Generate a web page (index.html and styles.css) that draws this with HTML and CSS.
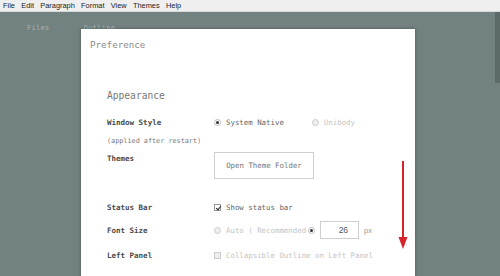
FILE: index.html
```html
<!DOCTYPE html>
<html lang="en">
<head>
  <meta charset="UTF-8" />
  <title>Preference</title>
  <link rel="stylesheet" href="styles.css">
</head>
<body>
  <div class="menubar">
    <span>File</span><span>Edit</span><span>Paragraph</span><span>Format</span><span>View</span><span>Themes</span><span>Help</span>
  </div>
  <div class="workspace">
    <div class="tabs"><span>Files</span><span>Outline</span></div>
    <div class="scrollbar"></div>

    <div class="modal">
      <h2 class="title">Preference</h2>
      <h3 class="section">Appearance</h3>

      <div class="rows">
        <div class="row row-window">
          <label class="name">Window Style</label>
          <div class="ctrl">
            <span class="opt"><i class="radio on"></i>System Native</span>
            <span class="opt off"><i class="radio"></i>Unibody</span>
          </div>
        </div>
        <div class="note">(applied after restart)</div>

        <div class="row row-themes">
          <label class="name">Themes</label>
          <div class="ctrl"><button>Open Theme Folder</button></div>
        </div>

        <div class="row row-status">
          <label class="name">Status Bar</label>
          <div class="ctrl"><span class="opt"><i class="check on"></i>Show status bar</span></div>
        </div>

        <div class="row row-font">
          <label class="name">Font Size</label>
          <div class="ctrl">
            <span class="opt off"><i class="radio"></i>Auto ( Recommended</span>
            <i class="radio on tight"></i>
            <input class="size" value="26" />
            <span class="unit">px</span>
          </div>
        </div>

        <div class="row row-left">
          <label class="name">Left Panel</label>
          <div class="ctrl"><span class="opt off"><i class="check"></i>Collapsible Outline on Left Panel</span></div>
        </div>
      </div>

      <svg class="arrow" width="12" height="90" viewBox="0 0 12 90">
        <line x1="6" y1="0" x2="6" y2="80" stroke="#d8222c" stroke-width="2" />
        <polygon points="1.5,76 10.5,76 6,88" fill="#d8222c" />
      </svg>
    </div>
  </div>
</body>
</html>
```

FILE: styles.css
```css
* {
  box-sizing: border-box;
}
body {
  margin: 0;
  width: 500px;
  height: 276px;
  overflow: hidden;
  font-family: "DejaVu Sans Mono", "Liberation Mono", monospace;
  background: #728281;
}
.menubar {
  height: 12px;
  background: #efefef;
  border-bottom: 1px solid #d6d8d8;
  display: flex;
  gap: 6.3px;
  padding-left: 3px;
  font-family: "Liberation Sans", Arial, sans-serif;
  font-size: 7.4px;
  line-height: 11px;
  color: #222;
}
.workspace {
  position: relative;
  height: 264px;
}
.tabs {
  display: flex;
  gap: 34px;
  padding: 12px 0 0 27px;
  font-size: 7px;
  color: #a8b4b4;
  letter-spacing: 0.3px;
}
.scrollbar {
  position: absolute;
  right: 0;
  top: 0;
  width: 5px;
  height: 71px;
  background: #5c6a6a;
}
.modal {
  position: absolute;
  left: 81px;
  top: 17px;
  width: 334px;
  height: 260px;
  background: #fff;
  box-shadow: 0 0 3px rgba(0, 0, 0, 0.35);
  padding: 10px 0 0 9px;
  color: #555;
}
.title {
  margin: 0;
  font-size: 9.2px;
  font-weight: normal;
  color: #8a8a8a;
  line-height: 12px;
}
.section {
  margin: 39px 0 0 17px;
  font-size: 9.6px;
  font-weight: normal;
  color: #777;
  line-height: 12px;
}
.rows {
  margin: 16px 0 0 17px;
}
.row {
  display: grid;
  grid-template-columns: 107px 1fr;
  align-items: center;
}
.name {
  font-size: 7.5px;
  font-weight: 600;
  color: #4a4a4a;
}
.ctrl {
  display: flex;
  align-items: center;
  font-size: 7.4px;
  color: #666;
}
.opt {
  display: flex;
  align-items: center;
  gap: 5px;
}
.opt.off {
  color: #c4c4c4;
}
.row-window .ctrl {
  gap: 28px;
}
.note {
  margin-top: 10px;
  font-size: 6.8px;
  color: #777;
  line-height: 8px;
}
.row-themes {
  margin-top: 7px;
  align-items: start;
}
.row-themes .name {
  margin-top: 2px;
}
button {
  width: 100px;
  height: 27px;
  background: #fff;
  border: 1px solid #cfcfcf;
  font-family: inherit;
  font-size: 7.4px;
  color: #777;
}
.row-status {
  margin-top: 24px;
}
.row-font {
  margin-top: 9px;
}
.row-left {
  margin-top: 12px;
}
.radio {
  width: 7px;
  height: 7px;
  border-radius: 50%;
  border: 1px solid #ccc;
  background: #eee;
  display: inline-block;
  position: relative;
}
.radio.on {
  border-color: #bbb;
  background: #fff;
}
.radio.on::after {
  content: "";
  position: absolute;
  left: 1px;
  top: 1px;
  width: 3px;
  height: 3px;
  border-radius: 50%;
  background: #333;
}
.radio.tight {
  margin-left: 2px;
}
.check {
  width: 7px;
  height: 7px;
  border: 1px solid #ccc;
  background: #eee;
  display: inline-block;
  position: relative;
}
.check.on {
  background: #fff;
  border-color: #999;
}
.check.on::after {
  content: "";
  position: absolute;
  left: 1.5px;
  top: -0.5px;
  width: 2px;
  height: 4px;
  border: solid #222;
  border-width: 0 1.5px 1.5px 0;
  transform: rotate(40deg);
}
.size {
  width: 39px;
  height: 18px;
  margin-left: 5px;
  border: 1px solid #cfcfcf;
  font-family: "Liberation Sans", Arial, sans-serif;
  font-size: 8.5px;
  color: #555;
  text-align: right;
  padding: 0 10px 0 0;
}
.unit {
  margin-left: 5px;
  font-family: "Liberation Sans", Arial, sans-serif;
  font-size: 7.5px;
  color: #999;
}
.arrow {
  position: absolute;
  left: 316px;
  top: 132px;
}
```
